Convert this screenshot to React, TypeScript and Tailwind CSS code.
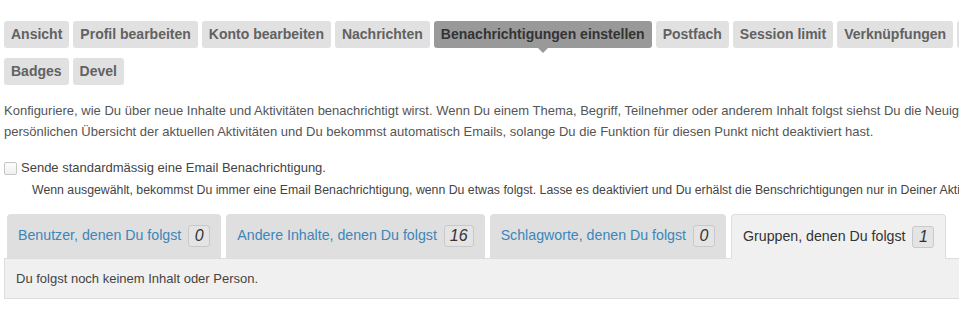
import React from 'react';

const topTabs = [
  'Ansicht',
  'Profil bearbeiten',
  'Konto bearbeiten',
  'Nachrichten',
  'Benachrichtigungen einstellen',
  'Postfach',
  'Session limit',
  'Verknüpfungen',
  'Datenschutz',
];

const subTabs = [
  { label: 'Benutzer, denen Du folgst', count: 0 },
  { label: 'Andere Inhalte, denen Du folgst', count: 16 },
  { label: 'Schlagworte, denen Du folgst', count: 0 },
  { label: 'Gruppen, denen Du folgst', count: 1, active: true },
];

const TopTab: React.FC<{ label: string; active?: boolean }> = ({ label, active }) => (
  <div
    className={
      'relative h-[27px] shrink-0 flex items-center px-[7px] rounded-[3px] text-[14px] font-bold whitespace-nowrap ' +
      (active ? 'bg-[#999999] text-[#333333]' : 'bg-[#e1e1e1] text-[#626262]')
    }
  >
    {label}
    {active && (
      <span className="absolute left-1/2 -translate-x-1/2 top-full w-0 h-0 border-x-[5px] border-x-transparent border-t-[5px] border-t-[#999999]" />
    )}
  </div>
);

export default function App() {
  return (
    <div className="w-[959px] h-[321px] overflow-hidden bg-white font-['Liberation_Sans',Arial,sans-serif]">
      <div className="pt-[21px] pl-[4px]">
        <div className="flex gap-[4px]">
          {topTabs.map((t) => (
            <TopTab key={t} label={t} active={t === 'Benachrichtigungen einstellen'} />
          ))}
        </div>
        <div className="flex gap-[4px] mt-[10px]">
          <TopTab label="Badges" />
          <TopTab label="Devel" />
        </div>
      </div>

      <div className="mt-[15px] pl-[4px] text-[13px] leading-[21px] text-[#555555] whitespace-nowrap">
        <div>
          Konfiguriere, wie Du über neue Inhalte und Aktivitäten benachrichtigt wirst. Wenn Du einem Thema, Begriff, Teilnehmer oder anderem Inhalt folgst siehst Du die Neuigkeiten dazu in Deiner
        </div>
        <div>
          persönlichen Übersicht der aktuellen Aktivitäten und Du bekommst automatisch Emails, solange Du die Funktion für diesen Punkt nicht deaktiviert hast.
        </div>
      </div>

      <div className="mt-[16px] pl-[4px] flex items-center gap-[4px] text-[13px] leading-[20px] text-[#444444] whitespace-nowrap">
        <span className="w-[13px] h-[13px] border border-[#c6c6c6] rounded-[2px] bg-gradient-to-b from-[#fdfdfd] to-[#f0f0f0]" />
        <span>Sende standardmässig eine Email Benachrichtigung.</span>
      </div>
      <div className="mt-[2px] pl-[32px] text-[12.3px] leading-[20px] text-[#444444] whitespace-nowrap">
        Wenn ausgewählt, bekommst Du immer eine Email Benachrichtigung, wenn Du etwas folgst. Lasse es deaktiviert und Du erhälst die Benschrichtigungen nur in Deiner Aktivitätenübersicht.
      </div>

      <div className="mt-[14px] pl-[4px] w-[1000px]">
        <div className="flex gap-[5px] pl-[3px] relative z-10">
          {subTabs.map((t) => (
            <div
              key={t.label}
              className={
                'flex items-center gap-[7px] pl-[11px] pr-[11px] rounded-t-[4px] text-[14.2px] whitespace-nowrap ' +
                (t.active
                  ? 'h-[45px] mb-[-1px] bg-[#f0f0f0] border border-[#dddddd] border-b-[#f0f0f0] text-[#333333]'
                  : 'h-[44px] bg-[#dfdfdf] text-[#3c86b9]')
              }
            >
              <span>{t.label}</span>
              <span className="min-w-[22px] h-[22px] px-[5px] flex items-center justify-center border border-[#c9c9c9] rounded-[3px] bg-[#e4e4e4] text-[16px] italic text-[#333333]">
                {t.count}
              </span>
            </div>
          ))}
        </div>
        <div className="h-[41px] flex items-center pl-[11px] bg-[#f0f0f0] border border-[#dddddd] text-[13px] text-[#444444]">
          Du folgst noch keinem Inhalt oder Person.
        </div>
      </div>
    </div>
  );
}
